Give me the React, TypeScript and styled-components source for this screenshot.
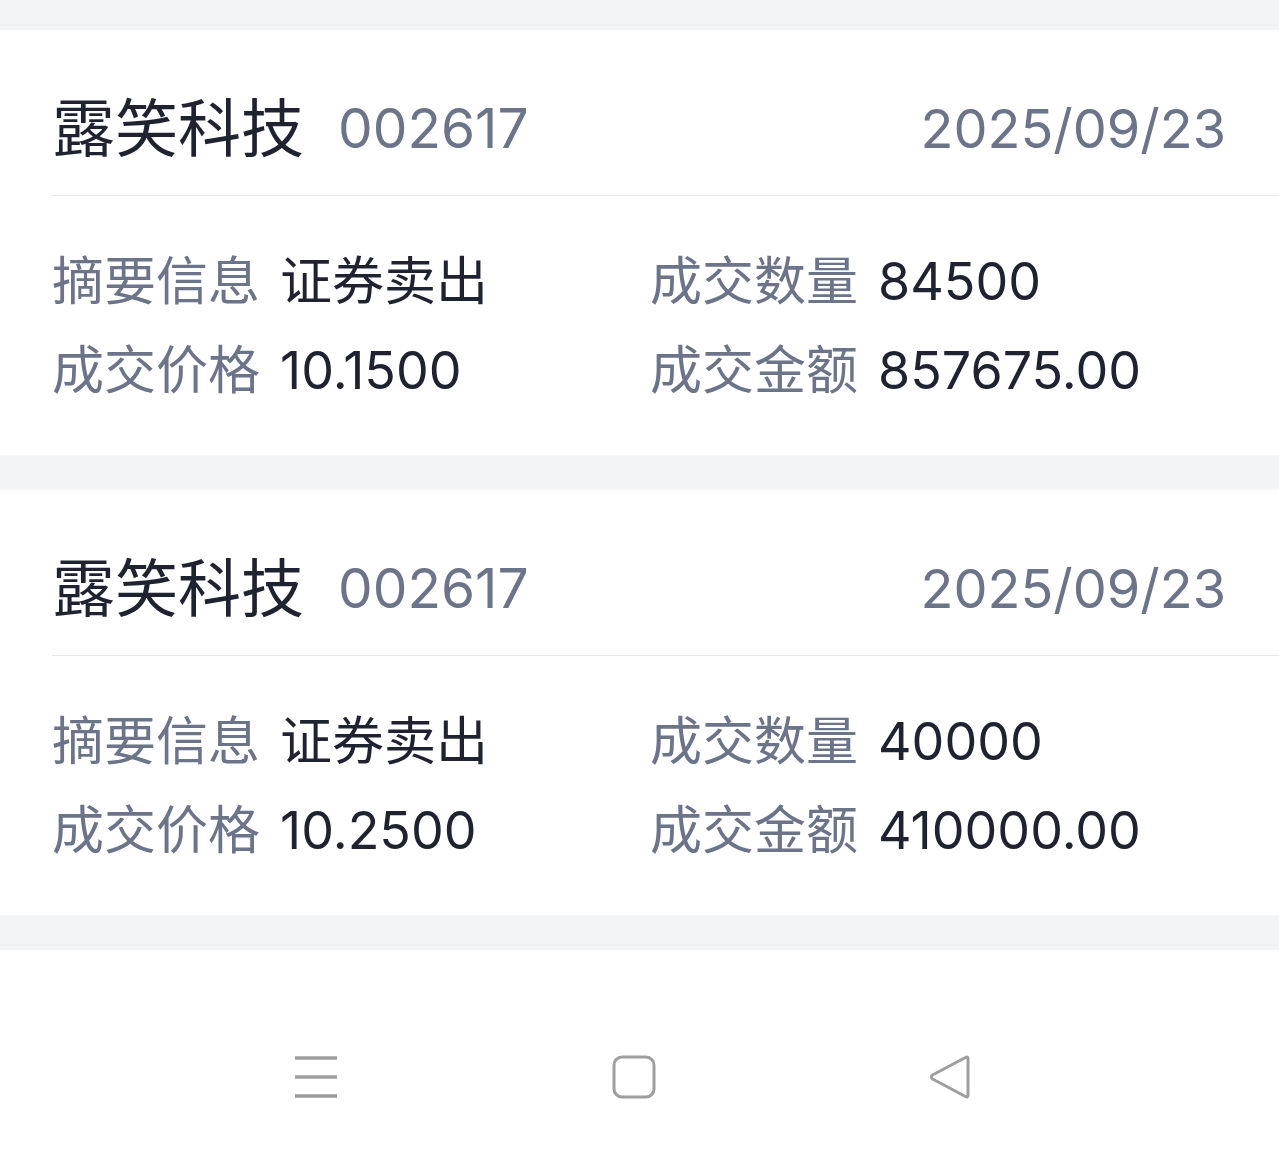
import styled, { createGlobalStyle } from "styled-components";

const GlobalStyle = createGlobalStyle`
	body {
		margin: 0;
		background: #ffffff;
		font-family: Inter, "Noto Sans CJK SC", sans-serif;
	}
`;

const Page = styled.div`
	display: flex;
	flex-direction: column;
	width: 1279px;
	height: 1153px;
	background: #ffffff;
`;

const Gap = styled.div<{ $h: number }>`
	height: ${(p) => p.$h}px;
	background: #f3f4f6;
	flex-shrink: 0;
`;

const Card = styled.div`
	height: 425px;
	padding-left: 52px;
	background: #ffffff;
	box-sizing: border-box;
	display: flex;
	flex-direction: column;
`;

const Header = styled.div`
	height: 166px;
	display: flex;
	align-items: center;
	padding-top: 32px;
	padding-right: 53px;
	border-bottom: 1px solid #e6e7ea;
	box-sizing: border-box;
`;

const Name = styled.span`
	font-size: 63px;
	color: #1f2230;
	line-height: 1;
`;

const Code = styled.span`
	font-size: 55px;
	color: #6b7489;
	margin-left: 34px;
	line-height: 1;
`;

const Date = styled.span`
	margin-left: auto;
	font-size: 54px;
	color: #6b7489;
	line-height: 1;
`;

const Grid = styled.div`
	display: grid;
	grid-template-columns: 598px 1fr;
	row-gap: 35px;
	padding-top: 59px;
`;

const Field = styled.div`
	display: flex;
	align-items: baseline;
	height: 54px;
	line-height: 54px;
`;

const Label = styled.span`
	font-size: 52px;
	color: #6b7489;
`;

const Value = styled.span`
	font-size: 52px;
	color: #1f2230;
	margin-left: 20px;
`;

const NavBar = styled.div`
	flex: 1;
	display: flex;
	align-items: center;
	justify-content: center;
	gap: 270px;
	padding-top: 51px;
	padding-right: 12px;
	color: #9e9e9e;
`;

type Trade = {
	name: string;
	code: string;
	date: string;
	summary: string;
	qty: string;
	price: string;
	amount: string;
};

const trades: Trade[] = [
	{
		name: "露笑科技",
		code: "002617",
		date: "2025/09/23",
		summary: "证券卖出",
		qty: "84500",
		price: "10.1500",
		amount: "857675.00",
	},
	{
		name: "露笑科技",
		code: "002617",
		date: "2025/09/23",
		summary: "证券卖出",
		qty: "40000",
		price: "10.2500",
		amount: "410000.00",
	},
];

function TradeCard({ t }: { t: Trade }) {
	return (
		<Card>
			<Header>
				<Name>{t.name}</Name>
				<Code>{t.code}</Code>
				<Date>{t.date}</Date>
			</Header>
			<Grid>
				<Field>
					<Label>摘要信息</Label>
					<Value>{t.summary}</Value>
				</Field>
				<Field>
					<Label>成交数量</Label>
					<Value>{t.qty}</Value>
				</Field>
				<Field>
					<Label>成交价格</Label>
					<Value>{t.price}</Value>
				</Field>
				<Field>
					<Label>成交金额</Label>
					<Value>{t.amount}</Value>
				</Field>
			</Grid>
		</Card>
	);
}

export default function App() {
	return (
		<Page>
			<GlobalStyle />
			<Gap $h={30} />
			{trades.map((t, i) => (
				<div key={i}>
					<TradeCard t={t} />
					<Gap $h={35} />
				</div>
			))}
			<NavBar>
				<svg width="46" height="46" viewBox="0 0 46 46">
					<g stroke="currentColor" strokeWidth="3.5">
						<line x1="0" y1="4" x2="42" y2="4" />
						<line x1="0" y1="23" x2="42" y2="23" />
						<line x1="0" y1="42" x2="42" y2="42" />
					</g>
				</svg>
				<svg width="46" height="46" viewBox="0 0 46 46">
					<rect
						x="3"
						y="3"
						width="40"
						height="40"
						rx="8"
						fill="none"
						stroke="currentColor"
						strokeWidth="3"
					/>
				</svg>
				<svg width="46" height="46" viewBox="0 0 46 46">
					<path
						d="M41 5 C41 3 40 2.5 38.5 3.5 L5.5 21 C4 22 4 24 5.5 25 L38.5 42.5 C40 43.5 41 43 41 41 Z"
						fill="none"
						stroke="currentColor"
						strokeWidth="3"
						strokeLinejoin="round"
					/>
				</svg>
			</NavBar>
		</Page>
	);
}
